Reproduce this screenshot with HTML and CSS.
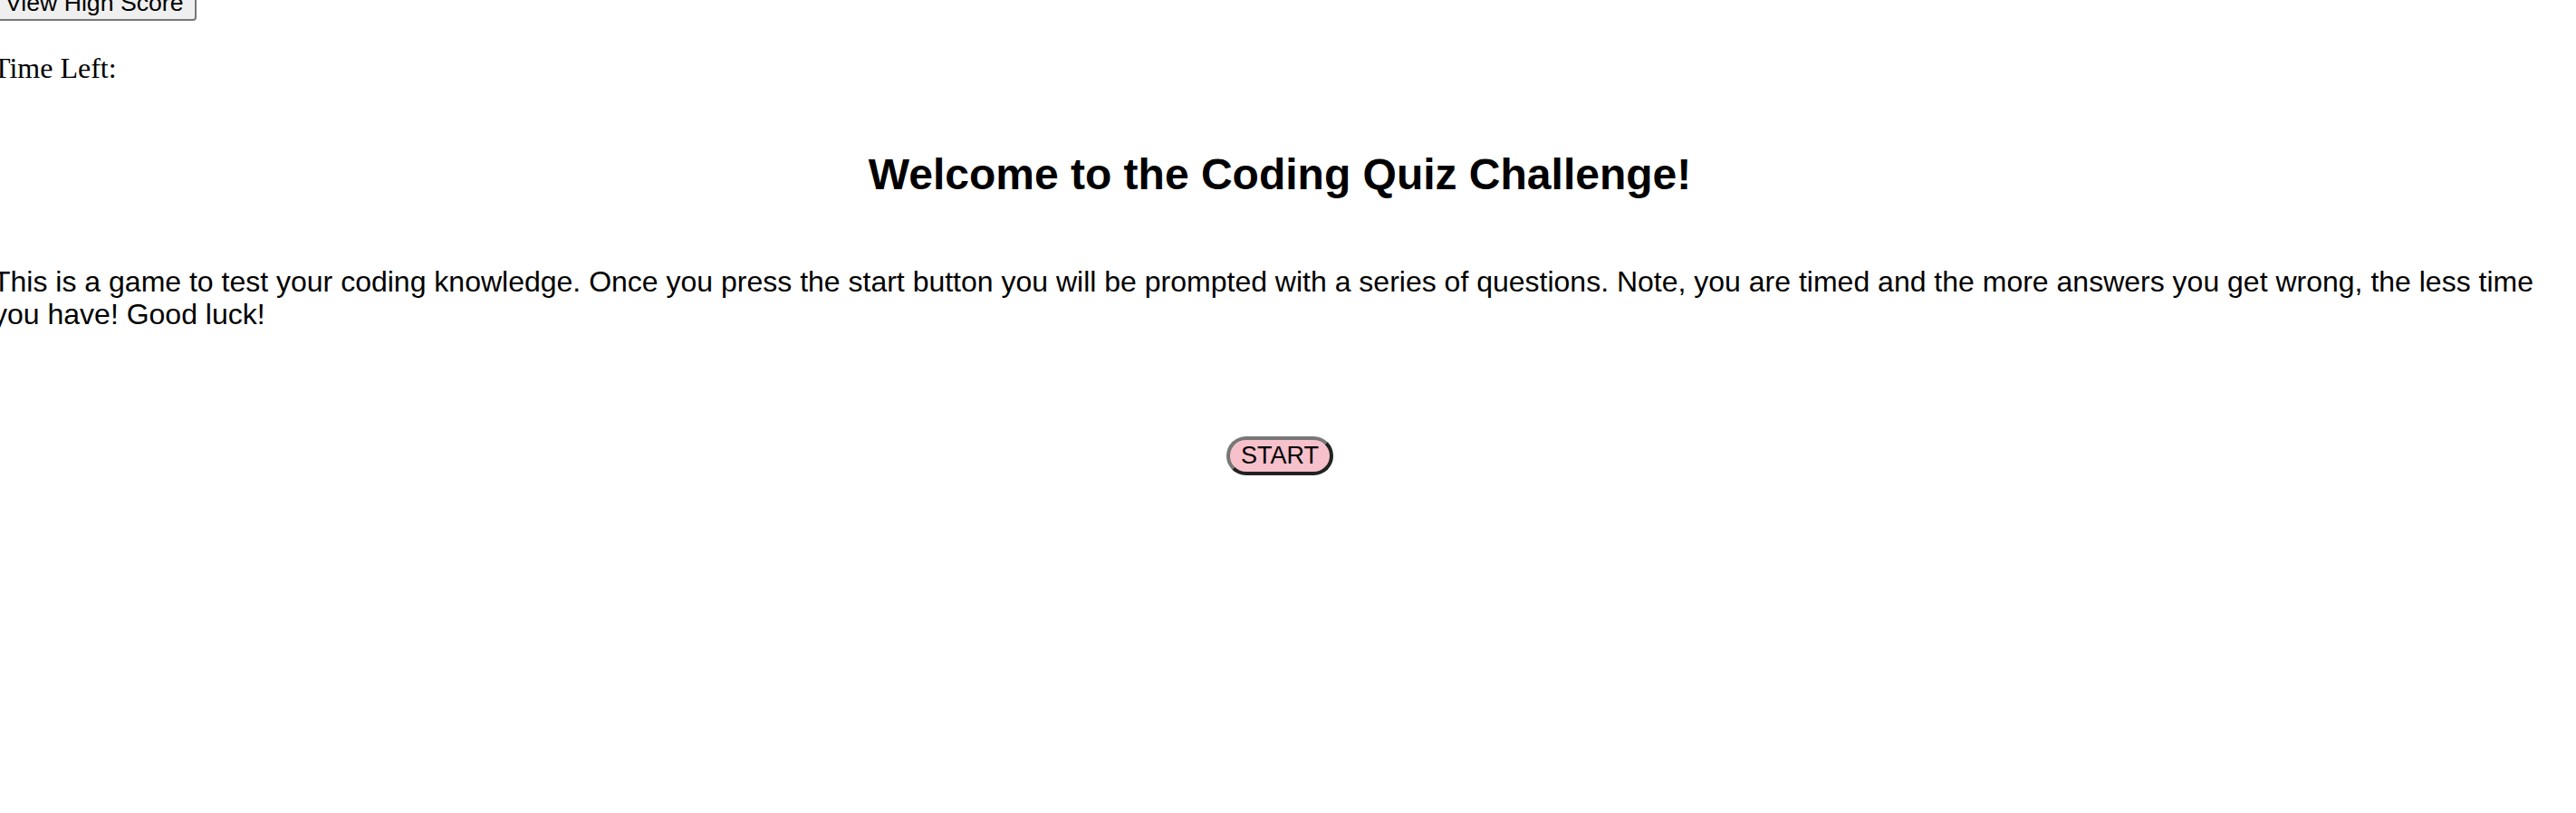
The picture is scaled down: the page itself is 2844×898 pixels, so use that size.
FILE: index.html
```html
<!DOCTYPE html>
<html lang="en">
<head>
<meta charset="utf-8">
<title>Coding Quiz Challenge</title>
<link rel="stylesheet" href="styles.css">
</head>
<body>
<div class="page">
  <header class="top">
    <button class="score-btn" type="button">View High Score</button>
    <p class="timer">Time Left: <span class="time-value"></span></p>
  </header>
  <main class="intro">
    <h1 class="title">Welcome to the Coding Quiz Challenge!</h1>
    <p class="desc">This is a game to test your coding knowledge. Once you press the start button you will be prompted with a series of questions. Note, you are timed and the more answers you get wrong, the less time you have! Good luck!</p>
    <div class="start-row">
      <button class="start-btn" type="button">START</button>
    </div>
  </main>
</div>
</body>
</html>
```

FILE: styles.css
```css
html, body {
  margin: 0;
  padding: 0;
  background: #ffffff;
}

body {
  overflow: hidden;
}

.page {
  margin: -16px 10px 0 -8px;
  color: #000;
}

.top {
  display: flex;
  flex-direction: column;
  align-items: flex-start;
}

.score-btn {
  font-family: "Liberation Sans", Arial, sans-serif;
  font-size: 26.67px;
  line-height: 30.67px;
  padding: 2px 12px;
  background: #efefef;
  color: #000;
  border: 2px solid #767676;
  border-radius: 4px;
  margin: 0;
}

.timer {
  font-family: "Liberation Serif", "Times New Roman", serif;
  font-size: 32px;
  line-height: 36.8px;
  margin: 34px 0 0 0;
}

.title {
  font-family: "Liberation Sans", Arial, sans-serif;
  font-size: 48px;
  font-weight: bold;
  line-height: 55.2px;
  text-align: center;
  margin: 72px 0 0 0;
}

.desc {
  font-family: "Liberation Sans", Arial, sans-serif;
  font-size: 32px;
  line-height: 36.8px;
  margin: 72px 0 0 0;
}

.start-row {
  display: flex;
  justify-content: center;
  margin-top: 116px;
}

.start-btn {
  font-family: "Liberation Sans", Arial, sans-serif;
  font-size: 27px;
  line-height: 31px;
  padding: 2px 12px;
  background: #f6c1cb;
  color: #000;
  border-style: solid;
  border-width: 4px;
  border-color: #777777 #222222 #222222 #777777;
  border-radius: 22px;
  margin: 0;
}
```
